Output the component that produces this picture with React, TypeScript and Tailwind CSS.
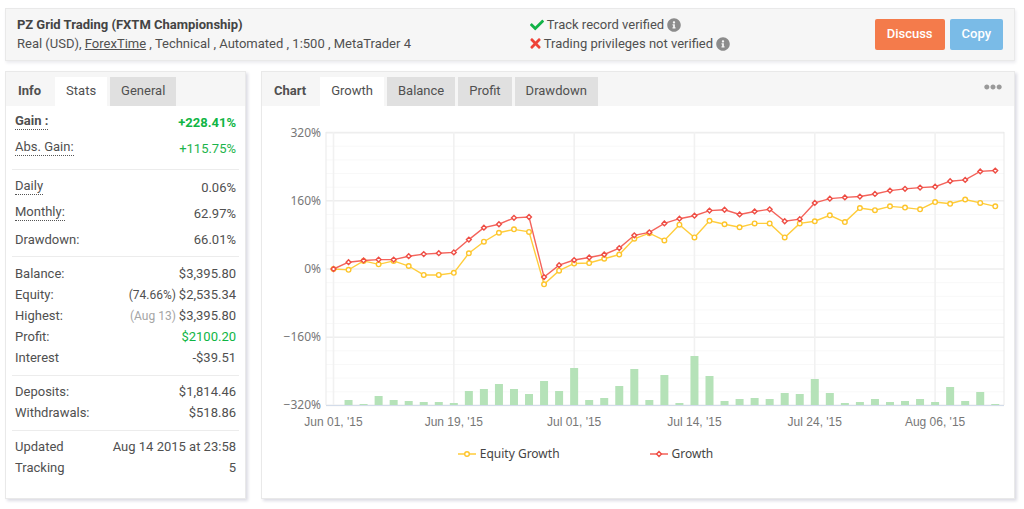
import React from 'react';
import { FaCheck, FaTimes, FaInfoCircle, FaEllipsisH } from 'react-icons/fa';
import { clsx } from 'clsx';

const growth = [
  0, 16, 20, 22, 22, 30, 35, 37, 39, 69, 97, 105, 120, 122, -19, 9, 21, 27, 34, 49, 79, 86, 107,
  118, 125, 137, 139, 128, 135, 140, 112, 117, 155, 165, 168, 170, 176, 184, 188, 191, 193, 206,
  209, 229, 231,
];

const equityGrowth = [
  0, -2, 19, 11, 19, 7, -14, -14, -9, 37, 64, 85, 93, 87, -36, -4, 13, 14, 24, 34, 71, 84, 67,
  104, 74, 113, 105, 98, 107, 107, 74, 107, 112, 126, 110, 143, 138, 147, 144, 140, 157, 153, 163,
  155, 147,
];

const volume = [
  0, 5, 1, 9, 5, 4, 3, 3, 2, 14, 16, 21, 16, 11, 24, 14, 37, 5, 7, 19, 36, 5, 30, 2, 49, 29, 4, 6,
  7, 6, 12, 11, 26, 12, 2, 3, 6, 3, 4, 6, 3, 18, 4, 13, 1,
];

const dates = ["Jun 01, '15", "Jun 19, '15", "Jul 01, '15", "Jul 14, '15", "Jul 24, '15", "Aug 06, '15"];

const PLOT = { left: 64, right: 742, top: 26, bottom: 299 };
const STEP = 15.04;

const xAt = (i: number) => 71.5 + i * STEP;
const yAt = (pct: number) => 163 - (pct * 68.2) / 160;
const toPoints = (series: number[]) => series.map((v, i) => `${xAt(i)},${yAt(v)}`).join(' ');

interface Row {
  label: string;
  value: string;
  note?: string;
  noteClass?: string;
  hint?: boolean;
  labelClass?: string;
  valueClass?: string;
}

interface Group {
  rowClass: string;
  className: string;
  rows: Row[];
}

const groups: Group[] = [
  {
    className: 'pt-1 pb-[7px]',
    rowClass: 'h-[26px]',
    rows: [
      { label: 'Gain :', value: '+228.41%', hint: true, labelClass: 'font-bold', valueClass: 'font-bold text-[#0fb544]' },
      { label: 'Abs. Gain:', value: '+115.75%', hint: true, valueClass: 'text-[#1cb44c]' },
    ],
  },
  {
    className: 'border-t pt-[5px] pb-[3px]',
    rowClass: 'h-[26px]',
    rows: [
      { label: 'Daily', value: '0.06%', hint: true },
      { label: 'Monthly:', value: '62.97%', hint: true },
      { label: 'Drawdown:', value: '66.01%' },
    ],
  },
  {
    className: 'border-t pt-[6px] pb-[7px]',
    rowClass: 'h-[21px]',
    rows: [
      { label: 'Balance:', value: '$3,395.80' },
      { label: 'Equity:', value: '$2,535.34', note: '(74.66%)' },
      { label: 'Highest:', value: '$3,395.80', note: '(Aug 13)', noteClass: 'text-[#a5a5a5]' },
      { label: 'Profit:', value: '$2100.20', valueClass: 'text-[#0fb544]' },
      { label: 'Interest', value: '-$39.51' },
    ],
  },
  {
    className: 'border-t pt-[5px] pb-[7px]',
    rowClass: 'h-[21px]',
    rows: [
      { label: 'Deposits:', value: '$1,814.46' },
      { label: 'Withdrawals:', value: '$518.86' },
    ],
  },
  {
    className: 'border-t pt-[5px] pb-5',
    rowClass: 'h-[21px]',
    rows: [
      { label: 'Updated', value: 'Aug 14 2015 at 23:58' },
      { label: 'Tracking', value: '5' },
    ],
  },
];

interface TabBarProps {
  title: string;
  tabs: string[];
  children?: React.ReactNode;
}

const TabBar: React.FC<TabBarProps> = ({ title, tabs, children }) => (
  <div className="flex h-[34px] items-end bg-[#f6f6f6] pl-3">
    <h2 className="mr-[14px] h-[29px] leading-[27px] font-bold">{title}</h2>
    <div role="tablist" className="flex gap-[3px]">
      {tabs.map((tab, i) => (
        <button
          key={tab}
          type="button"
          role="tab"
          aria-selected={i === 0}
          className={clsx(
            'h-[29px] px-[11px] pb-[2px] leading-[27px]',
            i === 0 ? 'bg-white' : 'bg-[#e0e0e0]'
          )}
        >
          {tab}
        </button>
      ))}
    </div>
    {children}
  </div>
);

const StatRow: React.FC<{ row: Row; className: string }> = ({ row, className }) => (
  <div className={clsx('flex items-center justify-between', className)}>
    <dt
      className={clsx(
        row.hint && 'mb-1 border-b border-dotted border-[#555] leading-4',
        row.labelClass
      )}
    >
      {row.label}
    </dt>
    <dd className={row.valueClass}>
      {row.note && <span className={clsx('text-xs', row.noteClass)}>{row.note} </span>}
      {row.value}
    </dd>
  </div>
);

const GrowthChart: React.FC = () => (
  <svg viewBox="0 0 752 328" className="block w-full" role="img" aria-label="Growth chart">
    {/* Grid */}
    {Array.from({ length: 21 }, (_, i) => 320 - i * 32).map((pct) => (
      <line
        key={pct}
        x1={PLOT.left}
        x2={PLOT.right}
        y1={yAt(pct)}
        y2={yAt(pct)}
        stroke={pct % 160 === 0 ? '#eeeeee' : '#f8f8f8'}
        strokeWidth={pct % 160 === 0 ? 1.6 : 1}
      />
    ))}
    {dates.map((date, i) => (
      <line key={date} x1={xAt(i * 8)} x2={xAt(i * 8)} y1={PLOT.top} y2={PLOT.bottom} stroke="#f1f1f1" strokeWidth="1.6" />
    ))}
    <path d={`M${PLOT.left} ${PLOT.bottom}V${PLOT.top}M${PLOT.right} ${PLOT.top}V${PLOT.bottom}`} stroke="#e9e9e9" />

    {/* Volume bars */}
    {volume.map((h, i) => (
      <rect key={i} x={xAt(i) - 4} y={PLOT.bottom - h} width="8" height={h} fill="#b5e2b8" />
    ))}
    <line x1={PLOT.left} x2={PLOT.right} y1="299.5" y2="299.5" stroke="#d3dcea" />

    {/* Series */}
    <polyline points={toPoints(equityGrowth)} fill="none" stroke="#ffcd3c" strokeWidth="1.4" />
    {equityGrowth.map((v, i) => (
      <circle key={i} cx={xAt(i)} cy={yAt(v)} r="2.3" fill="#fff" stroke="#fdc52c" strokeWidth="1.4" />
    ))}
    <polyline points={toPoints(growth)} fill="none" stroke="#f4635b" strokeWidth="1.4" />
    {growth.map((v, i) => (
      <path
        key={i}
        d={`M${xAt(i)} ${yAt(v) - 2.4}l2.4 2.4l-2.4 2.4l-2.4 -2.4z`}
        fill="#fff"
        stroke="#ee4d44"
        strokeWidth="1.4"
      />
    ))}

    {/* Axis labels */}
    <g className="fill-[#777] font-['Noto_Sans',sans-serif] text-xs">
      {[320, 160, 0, -160, -320].map((pct) => (
        <text key={pct} x="59" y={yAt(pct) + 4} textAnchor="end">
          {pct < 0 ? `−${-pct}%` : `${pct}%`}
        </text>
      ))}
    </g>
    <g className="fill-[#777] font-['Liberation_Sans',sans-serif] text-xs">
      {dates.map((date, i) => (
        <text key={date} x={xAt(i * 8)} y="320" textAnchor="middle">
          {date}
        </text>
      ))}
    </g>
  </svg>
);

const Legend: React.FC = () => (
  <ul className="flex justify-center gap-[90px] pt-[10px] pr-[105px] font-['Noto_Sans',sans-serif] text-xs leading-5 text-[#444]">
    <li className="flex items-center gap-1">
      <svg width="18" height="8" viewBox="0 0 18 8">
        <path d="M0 4H18" stroke="#ffc72b" strokeWidth="1.4" />
        <circle cx="9" cy="4" r="2.3" fill="#fff" stroke="#fdc52c" strokeWidth="1.4" />
      </svg>
      Equity Growth
    </li>
    <li className="flex items-center gap-1">
      <svg width="18" height="8" viewBox="0 0 18 8">
        <path d="M0 4H18" stroke="#f2574e" strokeWidth="1.4" />
        <path d="M9 1.6L11.4 4L9 6.4L6.6 4z" fill="#fff" stroke="#ee4d44" strokeWidth="1.4" />
      </svg>
      Growth
    </li>
  </ul>
);

const App: React.FC = () => (
  <main className="min-h-screen bg-white pt-2 pr-[9px] pb-[10px] pl-[5px] font-[Roboto,sans-serif] text-[13px] leading-5 text-[#505050]">
    {/* System header */}
    <header className="flex items-start border border-[#e9e9e9] bg-[#f6f6f6] px-[11px] pt-[6px] pb-[7px] leading-[19px] shadow-[1px_2px_3px_#ececf0]">
      <div className="w-[52%]">
        <h1 className="font-bold text-[#444]">PZ Grid Trading (FXTM Championship)</h1>
        <p>
          Real (USD), <a href="#forextime" className="underline">ForexTime</a> , Technical , Automated , 1:500 ,
          MetaTrader 4
        </p>
      </div>
      <div className="flex-1">
        <p className="flex items-center gap-[3px]">
          <FaCheck className="h-[14px] w-[14px] text-[#12b347]" />
          Track record verified
          <FaInfoCircle className="h-[14px] w-[14px] text-[#8c8c8c]" />
        </p>
        <p className="flex items-center gap-[3px]">
          <FaTimes className="h-[15px] w-[11px] text-[#ee4338]" />
          Trading privileges not verified
          <FaInfoCircle className="h-[14px] w-[14px] text-[#8c8c8c]" />
        </p>
      </div>
      <div className="flex gap-[5px] pt-1 font-medium text-white">
        <button type="button" className="h-[31px] rounded-xs bg-[#f47b4b] px-3 pb-[2px]">
          Discuss
        </button>
        <button type="button" className="h-[31px] rounded-xs bg-[#7abbe7] px-3 pb-[2px]">
          Copy
        </button>
      </div>
    </header>

    <div className="mt-[10px] flex gap-[15px]">
      {/* Info */}
      <section className="w-[241px] shrink-0 border border-[#e9e9e9] bg-white shadow-[2px_2px_3px_#dcdce4]">
        <TabBar title="Info" tabs={['Stats', 'General']} />
        <div className="px-[6px]">
          {groups.map((group, i) => (
            <dl key={i} className={clsx('border-[#ececec] px-[3px]', group.className)}>
              {group.rows.map((row) => (
                <StatRow key={row.label} row={row} className={group.rowClass} />
              ))}
            </dl>
          ))}
        </div>
      </section>

      {/* Chart */}
      <section className="min-w-0 flex-1 border border-[#e9e9e9] bg-white shadow-[2px_2px_3px_#dcdce4]">
        <TabBar title="Chart" tabs={['Growth', 'Balance', 'Profit', 'Drawdown']}>
          <button type="button" aria-label="More options" className="mr-3 mb-[10px] ml-auto text-[#999]">
            <FaEllipsisH className="h-[18px] w-[18px]" />
          </button>
        </TabBar>
        <GrowthChart />
        <Legend />
      </section>
    </div>
  </main>
);

export default App;
